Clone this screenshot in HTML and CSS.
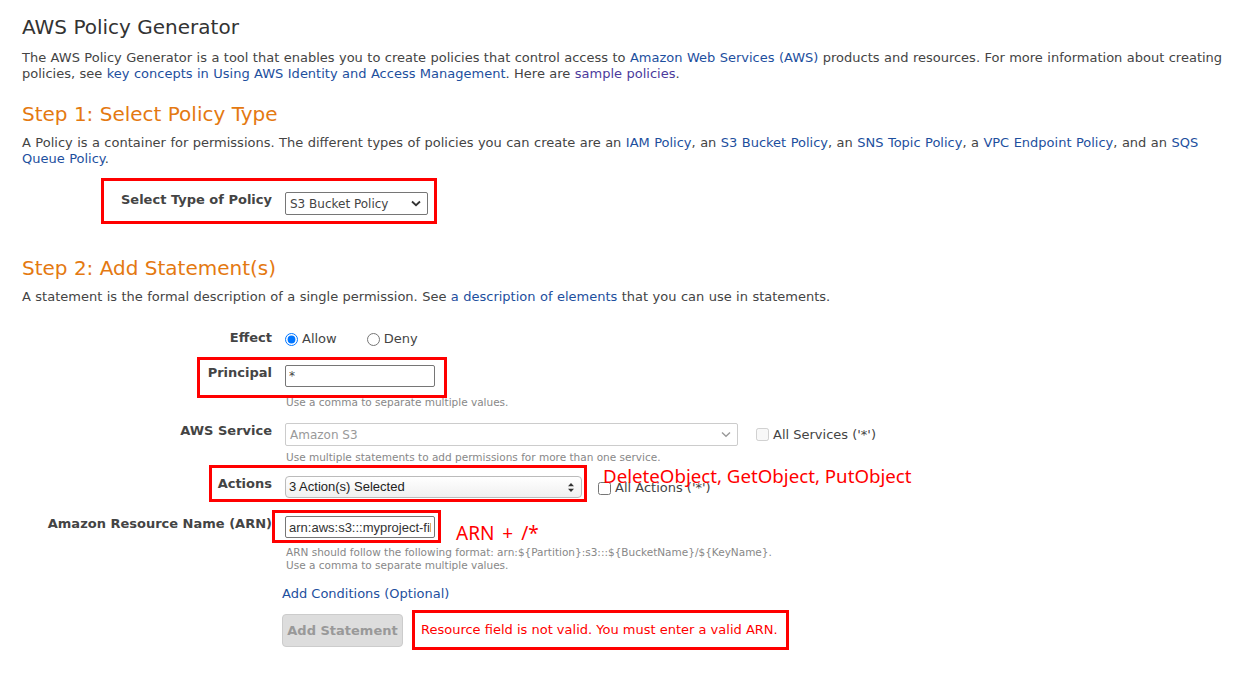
FILE: index.html
```html
<!DOCTYPE html>
<html lang="en">
<head>
    <meta charset="UTF-8">
    <title>AWS Policy Generator</title>
    <link rel="stylesheet" href="styles.css">
</head>
<body>

    <div class="page">
        <h1 class="title">AWS Policy Generator</h1>
        <p class="intro">The AWS Policy Generator is a tool that enables you to create policies that control access to <a href="#">Amazon Web Services (AWS)</a> products and resources. For more information about creating policies, see <a href="#">key concepts in Using AWS Identity and Access Management</a>. Here are <a href="#" class="visited">sample policies</a>.</p>

        <!-- Step 1 -->
        <h2 class="step">Step 1: Select Policy Type</h2>
        <p class="intro">A Policy is a container for permissions. The different types of policies you can create are an <a href="#">IAM Policy</a>, an <a href="#">S3 Bucket Policy</a>, an <a href="#">SNS Topic Policy</a>, a <a href="#">VPC Endpoint Policy</a>, and an <a href="#">SQS Queue Policy</a>.</p>

        <div class="form form-type">
            <div class="row">
                <div class="label">Select Type of Policy</div>
                <div class="control">
                    <div class="select select-type">
                        <span>S3 Bucket Policy</span>
                        <svg class="chevron" width="10" height="7" viewBox="0 0 10 7"><path d="M1 1.5 L5 5.2 L9 1.5" fill="none" stroke="#333" stroke-width="1.8"/></svg>
                    </div>
                </div>
                <div class="mark mark-type"></div>
            </div>
        </div>

        <!-- Step 2 -->
        <h2 class="step step-two">Step 2: Add Statement(s)</h2>
        <p class="intro">A statement is the formal description of a single permission. See <a href="#">a description of elements</a> that you can use in statements.</p>

        <div class="form form-statement">
            <div class="row row-effect">
                <div class="label">Effect</div>
                <div class="control radios">
                    <label class="radio"><input type="radio" name="effect" checked> Allow</label>
                    <label class="radio"><input type="radio" name="effect"> Deny</label>
                </div>
            </div>

            <div class="row">
                <div class="label">Principal</div>
                <div class="control">
                    <input class="text-input" type="text" value="*">
                    <div class="hint hint-principal">Use a comma to separate multiple values.</div>
                </div>
                <div class="mark mark-principal"></div>
            </div>

            <div class="row">
                <div class="label">AWS Service</div>
                <div class="control">
                    <div class="inline">
                        <div class="select select-service">
                            <span>Amazon S3</span>
                            <svg class="chevron" width="10" height="7" viewBox="0 0 10 7"><path d="M1 1.5 L5 5.2 L9 1.5" fill="none" stroke="#999" stroke-width="1.4"/></svg>
                        </div>
                        <label class="check check-service"><input type="checkbox" disabled> All Services ('*')</label>
                    </div>
                    <div class="hint hint-tight">Use multiple statements to add permissions for more than one service.</div>
                </div>
            </div>

            <div class="row row-actions">
                <div class="label">Actions</div>
                <div class="control">
                    <div class="inline">
                        <div class="select select-actions">
                            <span>3 Action(s) Selected</span>
                            <svg class="updown" width="8" height="11" viewBox="0 0 8 11"><path d="M4 1 L7 4.3 H1 Z M4 10 L7 6.7 H1 Z" fill="#333"/></svg>
                        </div>
                        <label class="check check-actions"><input type="checkbox"> All Actions ('*')</label>
                    </div>
                </div>
                <div class="mark mark-actions"></div>
                <div class="note note-actions">DeleteObject, GetObject, PutObject</div>
            </div>

            <div class="row row-arn">
                <div class="label">Amazon Resource Name (ARN)</div>
                <div class="control">
                    <input class="text-input arn-input" type="text" value="arn:aws:s3:::myproject-files">
                    <div class="hint hint-arn">ARN should follow the following format: arn:${Partition}:s3:::${BucketName}/${KeyName}.<br>Use a comma to separate multiple values.</div>
                </div>
                <div class="mark mark-arn"></div>
                <div class="note note-arn">ARN + /*</div>
            </div>

            <div class="footer">
                <a href="#" class="conditions">Add Conditions (Optional)</a>
                <div class="submit">
                    <button class="add-btn" disabled>Add Statement</button>
                    <div class="error">Resource field is not valid. You must enter a valid ARN.</div>
                </div>
            </div>
        </div>
    </div>

</body>
</html>
```

FILE: styles.css
```css
/* Basic Reset */
* {
    margin: 0;
    padding: 0;
    box-sizing: border-box;
}

body {
    background: #fff;
    font-family: 'DejaVu Sans', Verdana, sans-serif;
    font-size: 13px;
    line-height: 16px;
    color: #444;
}

a {
    color: #1d4f9e;
    text-decoration: none;
}

a.visited {
    color: #4b3a9c;
}

.page {
    padding: 15px 12px 0 22px;
}

/* Headings */
.title {
    font-size: 20px;
    line-height: 24px;
    font-weight: normal;
    color: #333;
}

.intro {
    margin-top: 11px;
    word-spacing: 0.3px;
}

.step {
    font-size: 20px;
    line-height: 24px;
    font-weight: normal;
    color: #e47911;
    margin-top: 20px;
}

.step-two {
    margin-top: 41px;
}

.step + .intro {
    margin-top: 9px;
}

/* Form rows */
.form-type {
    margin-top: 25px;
}

.form-statement {
    margin-top: 25px;
}

.row {
    display: flex;
    align-items: flex-start;
    position: relative;
}

.label {
    width: 263px;
    flex-shrink: 0;
    padding-right: 13px;
    text-align: right;
    font-weight: bold;
    color: #444;
}

.control {
    display: flex;
    flex-direction: column;
}

.inline {
    display: flex;
    align-items: center;
}

.row + .row {
    margin-top: 14px;
}

.row-effect + .row {
    margin-top: 18px;
}

.row-actions {
    margin-top: 12px !important;
}

.row-arn {
    margin-top: 18px !important;
}

/* Inputs */
.radios {
    flex-direction: row;
    padding-top: 1px;
}

.radio {
    display: flex;
    align-items: center;
    margin-right: 30px;
}

.radio input {
    width: 13px;
    height: 13px;
    margin: 0 4px 0 0;
}

.text-input {
    width: 150px;
    height: 22px;
    border: 1px solid #767676;
    border-radius: 2px;
    padding: 0 3px;
    font-family: 'DejaVu Sans', Verdana, sans-serif;
    font-size: 12px;
    color: #444;
}

.arn-input {
    font-family: 'Liberation Sans Narrow', 'Liberation Sans', sans-serif;
    font-size: 13px;
    color: #333;
}

.select {
    height: 23px;
    display: flex;
    align-items: center;
    justify-content: space-between;
    border: 1px solid #767676;
    border-radius: 2px;
    padding: 0 6px 0 4px;
    font-size: 12px;
    background: #fff;
}

.select-type {
    width: 143px;
}

.select-service {
    width: 453px;
    border-color: #ccc;
    color: #999;
}

.select-actions {
    width: 297px;
    height: 22px;
    border-color: #bbb;
    border-radius: 4px;
    background: linear-gradient(#fff, #f0f0f0);
    color: #222;
    font-family: 'Liberation Sans Narrow', 'Liberation Sans', sans-serif;
    font-size: 13px;
    padding-left: 3px;
}

.check {
    display: flex;
    align-items: center;
}

.check input {
    width: 13px;
    height: 13px;
    margin: 0 4px 0 0;
}

.check-service {
    margin-left: 18px;
}

.check-actions {
    margin-left: 16px;
    margin-top: 2px;
}

.hint {
    font-size: 10.5px;
    line-height: 13px;
    color: #888;
    margin-top: 7px;
    padding-left: 1px;
}

.hint-principal {
    margin-top: 9px;
}

.hint-tight {
    margin-top: 5px;
}

.hint-arn {
    margin-top: 8px;
}

/* Footer */
.footer {
    margin-left: 260px;
    margin-top: 14px;
}

.conditions {
    display: block;
}

.submit {
    display: flex;
    align-items: center;
    margin-top: 8px;
}

.add-btn {
    width: 121px;
    height: 33px;
    border: 1px solid #ccc;
    border-radius: 4px;
    background: #ddd;
    color: #999;
    font-family: 'DejaVu Sans', Verdana, sans-serif;
    font-size: 13px;
    font-weight: bold;
}

.error {
    margin-left: 9px;
    border: 3px solid #f00;
    height: 40px;
    width: 377px;
    padding: 0 6px;
    display: flex;
    align-items: center;
    color: #f00;
    white-space: nowrap;
}

/* Red annotation marks */
.mark {
    position: absolute;
    border: 3px solid #f00;
}

.mark-type {
    left: 79px;
    top: -14px;
    width: 336px;
    height: 46px;
}

.mark-principal {
    left: 175px;
    top: -8px;
    width: 250px;
    height: 41px;
}

.mark-actions {
    left: 187px;
    top: -11px;
    width: 378px;
    height: 37px;
}

.mark-arn {
    left: 250px;
    top: -6px;
    width: 169px;
    height: 33px;
}

.note {
    position: absolute;
    font-family: 'Noto Sans', sans-serif;
    font-size: 18.7px;
    line-height: 22px;
    color: #f00;
    white-space: nowrap;
}

.note-actions {
    left: 581px;
    top: -11px;
}

.note-arn {
    left: 434px;
    top: 6px;
    font-size: 19px;
    word-spacing: 3px;
}
```
